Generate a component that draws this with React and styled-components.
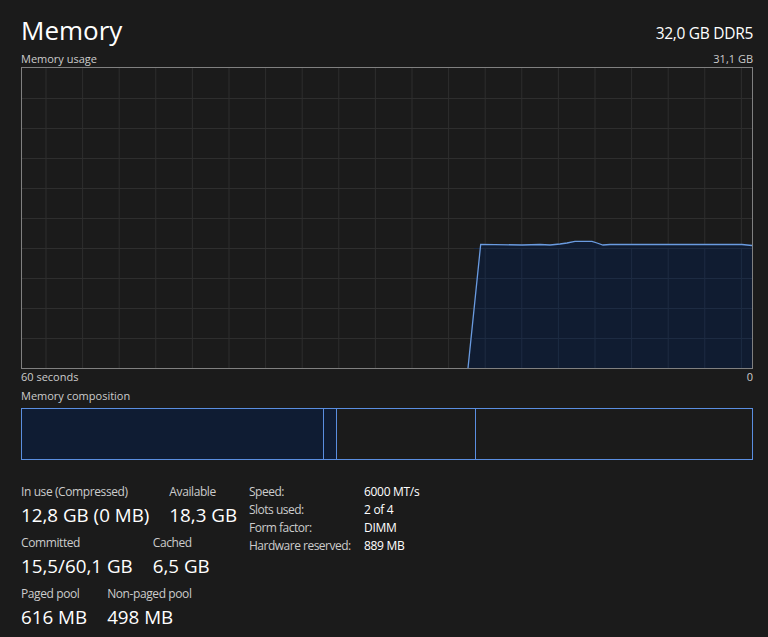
import React from 'react'
import styled, { createGlobalStyle } from "styled-components"

const GlobalStyle = createGlobalStyle`
    html, body {
        margin: 0;
        padding: 0;
        background: #1b1b1b;
    }
    body {
        font-family: "Open Sans", "Noto Sans", sans-serif;
        color: #ffffff;
    }
`

const Page = styled.main`
    width: 768px;
    height: 637px;
    box-sizing: border-box;
    padding: 11px 15px 0 21px;
    overflow: hidden;
`

const Header = styled.header`
    display: flex;
    justify-content: space-between;
    align-items: flex-end;
    height: 36px;
`

const Title = styled.h1`
    margin: 0;
    font-size: 26px;
    font-weight: 400;
    line-height: 34px;
`

const Spec = styled.div`
    font-size: 15.5px;
    letter-spacing: -0.3px;
    line-height: 24px;
    margin-bottom: 2px;
`

const CaptionRow = styled.div`
    display: flex;
    justify-content: space-between;
    align-items: ${p => p.$top ? "flex-start" : "flex-end"};
    font-size: 11px;
    line-height: 16px;
    height: ${p => p.$h || 16}px;
    color: #cccccc;
`

const Chart = styled.div`
    height: 300px;
    border: 1px solid #808080;
    background: #1b1b1b;

    svg {
        display: block;
    }
`

const Composition = styled.div`
    display: flex;
    height: 50px;
    border: 1px solid #5a8ee0;
    margin-top: 4px;
`

const Segment = styled.div`
    width: ${p => p.$w}px;
    flex: ${p => p.$grow ? 1 : "none"};
    background: ${p => p.$filled ? "#0f1c33" : "transparent"};
    border-right: ${p => p.$last ? "none" : "1px solid #5a8ee0"};
`

const Details = styled.section`
    display: flex;
    margin-top: 23px;
`

const Stats = styled.div`
    display: flex;
    flex-direction: column;
    gap: 4px;
    width: 228px;
    flex: none;
`

const StatRow = styled.div`
    display: flex;
    gap: 20px;
`

const Stat = styled.div`
    display: flex;
    flex-direction: column;
`

const StatLabel = styled.span`
    font-size: 12px;
    letter-spacing: -0.4px;
    line-height: 18px;
    color: #cccccc;
`

const StatValue = styled.span`
    font-size: 18.8px;
    line-height: 29px;
    white-space: nowrap;
`

const Props = styled.dl`
    display: grid;
    grid-template-columns: 115px auto;
    grid-auto-rows: 18px;
    margin: 0;
    font-size: 12px;
    letter-spacing: -0.5px;
    line-height: 18px;

    dt {
        color: #cccccc;
        white-space: nowrap;
    }
    dd {
        margin: 0;
        color: #ffffff;
        letter-spacing: -0.3px;
    }
`

const W = 730
const H = 300
const vLines = Array.from({ length: 20 }, (_, k) => 24 + 36.6 * k)
const hLines = Array.from({ length: 9 }, (_, k) => 30 * (k + 1))
const data = [
    [446, 300], [458.7, 176.3], [500, 177], [518, 176.5], [528, 177], [538, 176],
    [545, 175], [553, 173.3], [570, 173.3], [575, 175], [581, 177], [588, 176.5],
    [720, 176.5], [730, 177.5],
]

function UsageChart () {
    const line = data.map(([x, y]) => `${x},${y}`).join(" ")
    const area = `${line} ${W},${H} 446,${H}`
    return (
        <svg width={W} height={H}>
            {vLines.map(x => (
                <line key={"v" + x} x1={x} x2={x} y1={0} y2={H} stroke="#2e2e2e" strokeWidth="1" />
            ))}
            {hLines.map(y => (
                <line key={"h" + y} x1={0} x2={W} y1={y + 0.5} y2={y + 0.5} stroke="#2e2e2e" strokeWidth="1" />
            ))}
            <polygon points={area} fill="#0f1c33" fillOpacity="0.92" />
            {vLines.filter(x => x > 450).map(x => (
                <line key={"f" + x} x1={x} x2={x} y1={180} y2={H} stroke="#1d2b42" strokeWidth="1" />
            ))}
            {hLines.filter(y => y > 178).map(y => (
                <line key={"g" + y} x1={452} x2={W} y1={y + 0.5} y2={y + 0.5} stroke="#1d2b42" strokeWidth="1" />
            ))}
            <polyline points={line} fill="none" stroke="#6a9be0" strokeWidth="1.3" />
        </svg>
    )
}

export default function App () {
    return (
        <Page>
            <GlobalStyle />
            <Header>
                <Title>Memory</Title>
                <Spec>32,0 GB DDR5</Spec>
            </Header>
            <CaptionRow $h={20}>
                <span>Memory usage</span>
                <span>31,1 GB</span>
            </CaptionRow>
            <Chart>
                <UsageChart />
            </Chart>
            <CaptionRow $h={19} $top>
                <span>60 seconds</span>
                <span>0</span>
            </CaptionRow>
            <CaptionRow>
                <span>Memory composition</span>
            </CaptionRow>
            <Composition>
                <Segment $w={301} $filled />
                <Segment $w={12} $filled />
                <Segment $w={138} />
                <Segment $grow $last />
            </Composition>
            <Details>
                <Stats>
                    <StatRow>
                        <Stat>
                            <StatLabel>In use (Compressed)</StatLabel>
                            <StatValue>12,8 GB (0 MB)</StatValue>
                        </Stat>
                        <Stat>
                            <StatLabel>Available</StatLabel>
                            <StatValue>18,3 GB</StatValue>
                        </Stat>
                    </StatRow>
                    <StatRow>
                        <Stat>
                            <StatLabel>Committed</StatLabel>
                            <StatValue>15,5/60,1 GB</StatValue>
                        </Stat>
                        <Stat>
                            <StatLabel>Cached</StatLabel>
                            <StatValue>6,5 GB</StatValue>
                        </Stat>
                    </StatRow>
                    <StatRow>
                        <Stat>
                            <StatLabel>Paged pool</StatLabel>
                            <StatValue>616 MB</StatValue>
                        </Stat>
                        <Stat>
                            <StatLabel>Non-paged pool</StatLabel>
                            <StatValue>498 MB</StatValue>
                        </Stat>
                    </StatRow>
                </Stats>
                <Props>
                    <dt>Speed:</dt><dd>6000 MT/s</dd>
                    <dt>Slots used:</dt><dd>2 of 4</dd>
                    <dt>Form factor:</dt><dd>DIMM</dd>
                    <dt>Hardware reserved:</dt><dd>889 MB</dd>
                </Props>
            </Details>
        </Page>
    )
}
